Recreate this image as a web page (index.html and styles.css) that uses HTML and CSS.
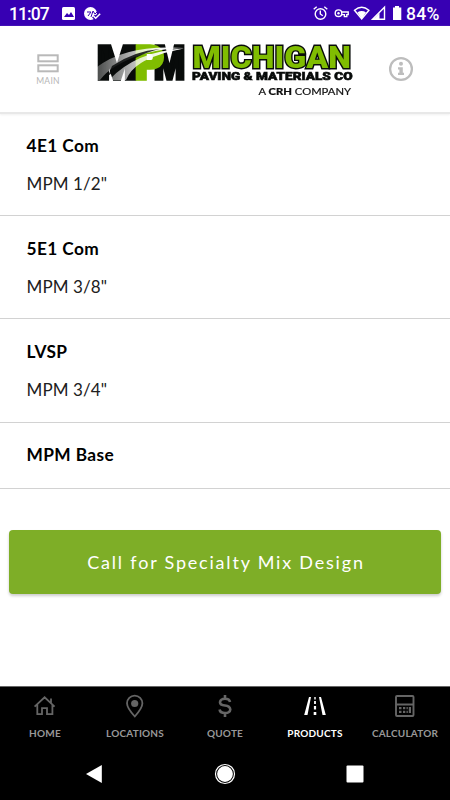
FILE: index.html
```html
<!DOCTYPE html>
<html lang="en">
<head>
<meta charset="utf-8">
<title>Michigan Paving &amp; Materials</title>
<link rel="stylesheet" href="styles.css">
</head>
<body>
<div class="status">
  <span class="time">11:07</span>
  <svg class="notifications" width="42" height="26" viewBox="0 0 42 26">
    <rect x="0" y="7" width="13" height="13" rx="1.5" fill="#fff"/>
    <path d="M2 17l3-4 2 2 2-3 3 5z" fill="#3700b3"/>
    <circle cx="28.500" cy="13.500" r="6.500" fill="#fff"/>
    <path d="M25 12h4l-3 4M29 17l2-6 2 3 3-3" fill="none" stroke="#3700b3" stroke-width="1"/>
    <path d="M31.500 16l2.200 2.200 4.500-4.500" fill="none" stroke="#3700b3" stroke-width="4"/>
    <path d="M31.500 16l2.200 2.200 4.500-4.500" fill="none" stroke="#fff" stroke-width="1.500"/>
  </svg>
  <svg class="system" width="90" height="26" viewBox="0 0 90 26">
    <g fill="none" stroke="#fff" stroke-width="1.4">
      <circle cx="7.5" cy="14" r="5.3"/><path d="M7.3 10.5V14l2.5 1.8M.7 9.2l3-2.5M14.3 9.2l-3-2.5"/>
      <circle cx="25.500" cy="13.200" r="3.300"/><path d="M28.500 12h6.700v2.600h-1.400v2h-2.400v-2h-2.900"/>
      <path d="M41.500 10.300q7.200-6 14.400 0L48.700 19z"/><path d="M59.500 19.300h12V7.300z"/>
    </g>
    <circle cx="25.500" cy="13.200" r="1.200" fill="#fff"/>
    <path d="M44.500 12.200q4.200-2.500 8.400 0L48.700 19zM59.500 20l7-7v7zM80 7.500h2V6h4v1.500h2.300V20H80z" fill="#fff"/>
  </svg>
  <span class="percent">84%</span>
</div>
<header class="header">
  <div class="main-menu">
    <svg width="22" height="19" viewBox="0 0 22 19" fill="none" stroke="#b9b9b9" stroke-width="2"><rect x="1.300" y="1.300" width="19.400" height="6"/><rect x="1.300" y="11.300" width="19.400" height="6"/></svg>
    <span>MAIN</span>
  </div>
  <svg class="logo" width="258" height="58" viewBox="96 42 258 58">
    <defs>
      <linearGradient id="road" x1="97" x2="185" y1="0" y2="0" gradientUnits="userSpaceOnUse"><stop offset="0" stop-color="#444"/><stop offset=".4" stop-color="#b5b5b5"/><stop offset=".75" stop-color="#f4f4f4"/><stop offset="1" stop-color="#fff"/></linearGradient>
    </defs>
    <rect x="96" y="42" width="258" height="58" fill="#fff"/>
    <text class="mpm" x="97" y="78.500" textLength="40" lengthAdjust="spacingAndGlyphs" fill="#080b0a" stroke="#080b0a">M</text>
    <text class="mpm" x="154" y="78.500" textLength="31" lengthAdjust="spacingAndGlyphs" fill="#080b0a" stroke="#080b0a">M</text>
    <text class="mpm" x="135" y="78.500" textLength="29" lengthAdjust="spacingAndGlyphs" fill="#80bd01" stroke="#80bd01">P</text>
    <g class="swoosh" fill="url(#road)">
      <path d="M97 67Q127 44 184 48Q144 49 116 66Q106 72 100 80H97z"/>
      <path d="M109 80Q136 51 184 48.500Q155 54 141 63Q130 70 126 80z"/>
    </g>
    <path d="M112 66Q134 51 160 49Q136 54 108 76z" fill="#080b0a" opacity=".85"/>
    <text class="michigan" x="192.500" y="68.300" textLength="158.500" lengthAdjust="spacingAndGlyphs">MICHIGAN</text>
    <text class="paving" x="192" y="79.800" textLength="160.500" lengthAdjust="spacingAndGlyphs">PAVING &amp; MATERIALS CO</text>
    <text class="company" x="258.500" y="95" textLength="92.500" lengthAdjust="spacingAndGlyphs">A <tspan class="crh">CRH</tspan> COMPANY</text>
  </svg>
  <svg class="info" width="26" height="26" viewBox="0 0 26 26"><circle cx="13" cy="13" r="10.900" fill="none" stroke="#bdbdbd" stroke-width="2.300"/><circle cx="13" cy="7.800" r="2" fill="#bdbdbd"/><path d="M10 11.200h4.800v5.600H16V19h-6v-2.200h1.400v-3.400H10z" fill="#bdbdbd"/></svg>
</header>
<main class="content">
  <section class="mix"><h2>4E1 Com</h2><p>MPM 1/2"</p></section>
  <section class="mix"><h2>5E1 Com</h2><p>MPM 3/8"</p></section>
  <section class="mix"><h2>LVSP</h2><p>MPM 3/4"</p></section>
  <section class="mix short"><h2>MPM Base</h2></section>
  <button class="call">Call for Specialty Mix Design</button>
</main>
<nav class="tabs">
  <div class="tab"><svg width="24" height="24" viewBox="0 0 24 24" fill="none" stroke="#656565" stroke-width="1.8"><path d="M1.600 12.600L11.600 3.300l10 9.300M4.300 10.500V20.200h4.700v-6h5v6h5.400v-9.700M18 9V4.500"/></svg><span>HOME</span></div>
  <div class="tab"><svg width="24" height="24" viewBox="0 0 24 24"><path d="M11.800 22.500Q4 14 4 9.300a7.700 7.700 0 0 1 15.400 0Q19.400 14 11.800 22.500z" fill="none" stroke="#656565" stroke-width="1.800"/><circle cx="11.700" cy="9.500" r="3.600" fill="#656565"/></svg><span>LOCATIONS</span></div>
  <div class="tab"><svg width="24" height="24" viewBox="0 0 24 24" fill="none" stroke="#656565" stroke-width="2.600"><path d="M17 8Q16.500 4.800 12 4.800T7 8.200Q7 11 12 11.500T17.300 15.500Q17 19 12 19T6.600 15.500M12 1v4M12 19v4"/></svg><span>QUOTE</span></div>
  <div class="tab active"><svg width="24" height="24" viewBox="0 0 24 24" fill="#fff"><path d="M6 3h2L4.500 21H1.200zM16 3h2l4.800 18h-3.300zM11.300 3h1.400v2.500h-1.400zM11.100 7h1.800v3h-1.800zM10.900 12h2.200v3.500h-2.200zM10.700 18h2.600v3h-2.600z"/></svg><span>PRODUCTS</span></div>
  <div class="tab"><svg width="24" height="24" viewBox="0 0 24 24"><path d="M4 2h15.500q1 0 1 1v18q0 1-1 1H4q-1 0-1-1V3q0-1 1-1zM3 10.500h17.500" fill="none" stroke="#656565" stroke-width="1.900"/><path d="M6 13h2.500v2.200H6zm4 0h2.300v2.200H10zM6 16.800h2.500V19H6zm4 0h2.300V19H10zm3.500 0h1.300V19h-1.300zm0-3.800h1.300v2.200h-1.300zM15.800 13H18v6h-2.200z" fill="#656565"/></svg><span>CALCULATOR</span></div>
</nav>
<div class="system-nav">
  <svg width="18" height="20" viewBox="0 0 18 20"><path d="M0 10L15.800 1v18z" fill="#fff"/></svg>
  <svg width="22" height="22" viewBox="0 0 22 22"><circle cx="11" cy="11" r="9.500" fill="none" stroke="#fff" stroke-width="1.200"/><circle cx="11" cy="11" r="7.900" fill="#fff"/></svg>
  <svg width="18" height="18" viewBox="0 0 18 18"><rect x=".5" y=".5" width="17" height="17" rx="1" fill="#fff"/></svg>
</div>
</body>
</html>
```
FILE: styles.css
```css
* { box-sizing: border-box; }
body { margin: 0; width: 450px; height: 800px; display: flex; flex-direction: column; background: #fff; font-family: Lato, "Liberation Sans", sans-serif; overflow: hidden; }
svg { display: block; flex: none; }
.status { height: 26px; flex: none; display: flex; align-items: center; background: #3700b3; color: #fff; font: 500 17.5px/28px Roboto, sans-serif; padding: 0 7px 0 9px; }
.time { width: 53px; letter-spacing: -.9px; padding-top: 2px; }
.system { margin-left: auto; }
.percent { width: 37px; margin-left: 3px; padding-top: 2px; letter-spacing: .3px; white-space: nowrap; }
.header { height: 88px; flex: none; margin-bottom: -1px; display: flex; align-items: flex-start; border-bottom: 2px solid #e8e8e8; box-shadow: 0 1px 2px #f0f0f0; }
.main-menu { width: 96px; padding-top: 28px; display: flex; flex-direction: column; align-items: center; color: #b5b5b5; font-size: 8.5px; line-height: 10px; letter-spacing: .3px; gap: 3px; }
.logo { margin-top: 16px; isolation: isolate; }
.swoosh { mix-blend-mode: screen; }
.info { margin: 30px 0 0 34px; }
.mpm { font: 900 46px Roboto, sans-serif; stroke-width: 3.6px; }
.michigan { font: 900 32px Roboto, sans-serif; fill: #80bd01; stroke: #080b0a; stroke-width: 2.8px; paint-order: stroke; }
.paving { font: 900 11.5px Roboto, sans-serif; fill: #080b0a; stroke: #080b0a; stroke-width: .6px; }
.company { font: 400 10px Lato, sans-serif; fill: #111; stroke: #111; stroke-width: .2px; }
.crh { font-weight: 900; }
.content { flex: 1; display: flex; flex-direction: column; }
.mix { height: 103.2px; flex: none; border-bottom: 1px solid #d2d2d2; padding: 20.6px 26.5px 0; }
.mix.short { height: 66px; }
.mix h2 { margin: 0; color: #000; font-size: 17.3px; line-height: 24px; font-weight: 700; letter-spacing: .4px; }
.mix p { margin: 14.4px 0 0; color: #202020; font-size: 17px; line-height: 24px; letter-spacing: .1px; }
.call { height: 64px; flex: none; margin: 41.4px 9px 0; border: 0; border-radius: 4px; background: #7eae27; box-shadow: 0 2px 3px #0003; color: #fff; font: 400 18px/24px Lato, sans-serif; letter-spacing: 1.8px; padding: 0 0 0 2px; }
.tabs { height: 61px; flex: none; display: grid; grid-template-columns: repeat(5, 1fr); background: #000; border-top: 1px solid #666; }
.tab { padding-top: 7px; display: flex; flex-direction: column; align-items: center; gap: 9px; color: #989898; font-size: 10px; font-weight: 700; line-height: 12px; letter-spacing: .2px; white-space: nowrap; }
.active { color: #fff; }
.system-nav { height: 53px; flex: none; background: #000; display: flex; align-items: center; justify-content: space-between; padding: 0 86.5px 0 86px; }
```
